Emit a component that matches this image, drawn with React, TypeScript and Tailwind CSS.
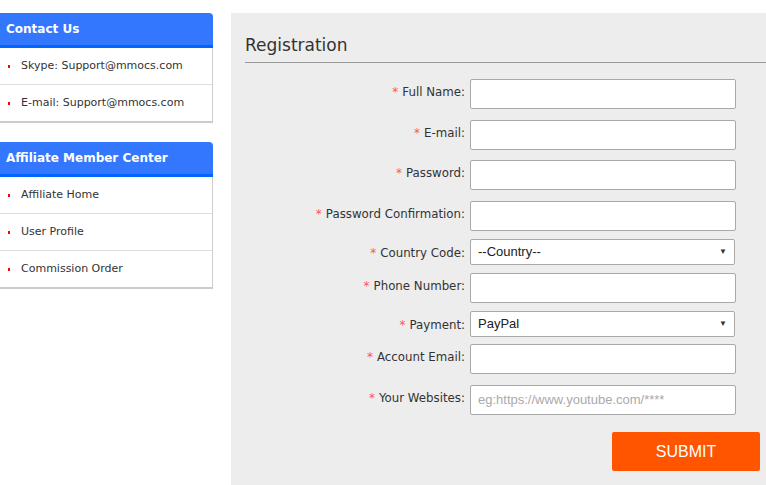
import React from 'react'

const SIDE_FONT = { fontFamily: '"DejaVu Sans", Verdana, sans-serif' }

function SideBox({ title, items }: { title: string; items: string[] }) {
  return (
    <div className="w-[213px]">
      <div className="h-[35px] rounded-tr-[4px] border-b-[3px] border-[#0066ff] bg-[#3377ff] pl-[6px] text-[12px] font-bold leading-[32px] text-white">
        {title}
      </div>
      <ul className="border-r border-b-2 border-[#cccccc] bg-white">
        {items.map((item, i) => {
          const last = i === items.length - 1
          return (
            <li
              key={item}
              className={`flex items-center pl-[8px] text-[11px] text-[#333333] ${
                last ? 'h-[36px]' : 'h-[37px] border-b border-[#dddddd]'
              }`}
            >
              <span className="mr-[11px] h-[3px] w-[2px] bg-[#ff0000]" />
              {item}
            </li>
          )
        })}
      </ul>
    </div>
  )
}

type Row = { label: string; kind: 'text' | 'select'; top: number; value?: string; placeholder?: string }

const ROWS: Row[] = [
  { label: 'Full Name:', kind: 'text', top: 16 },
  { label: 'E-mail:', kind: 'text', top: 11 },
  { label: 'Password:', kind: 'text', top: 10 },
  { label: 'Password Confirmation:', kind: 'text', top: 11 },
  { label: 'Country Code:', kind: 'select', top: 8, value: '--Country--' },
  { label: 'Phone Number:', kind: 'text', top: 8 },
  { label: 'Payment:', kind: 'select', top: 8, value: 'PayPal' },
  { label: 'Account Email:', kind: 'text', top: 7 },
  { label: 'Your Websites:', kind: 'text', top: 11, placeholder: 'eg:https://www.youtube.com/****' },
]

function FormRow({ row }: { row: Row }) {
  const isSelect = row.kind === 'select'
  return (
    <div className="flex" style={{ marginTop: row.top }}>
      <label
        className={`w-[234px] text-right text-[11.8px] text-[#333333] ${isSelect ? 'pt-[5px]' : 'pt-[4px]'}`}
        style={SIDE_FONT}
      >
        <span className="mr-[4px] text-[12px] text-[#ff5555]">*</span>
        {row.label}
      </label>
      {isSelect ? (
        <div
          className="ml-[5px] flex h-[26px] w-[265px] items-center justify-between rounded-[2px] border border-[#a9a9a9] bg-white pl-[7px] pr-[7px] text-[13px] text-[#222222]"
          style={{ fontFamily: '"Liberation Sans", Arial, sans-serif' }}
        >
          <span>{row.value}</span>
          <span className="text-[8px] text-[#333333]">▼</span>
        </div>
      ) : (
        <div
          className="ml-[5px] flex h-[30px] w-[266px] items-center rounded-[2px] border border-[#a9a9a9] bg-white pl-[7px] text-[13px] text-[#aaaaaa]"
          style={{ fontFamily: '"Liberation Sans", Arial, sans-serif' }}
        >
          {row.placeholder ?? ''}
        </div>
      )}
    </div>
  )
}

export default function App() {
  return (
    <div className="flex h-[485px] w-[766px] overflow-hidden bg-white pt-[13px]" style={SIDE_FONT}>
      <div className="flex w-[213px] flex-col gap-[19px]">
        <SideBox title="Contact Us" items={['Skype: Support@mmocs.com', 'E-mail: Support@mmocs.com']} />
        <SideBox title="Affiliate Member Center" items={['Affiliate Home', 'User Profile', 'Commission Order']} />
      </div>
      <div className="ml-[18px] flex-1 bg-[#ededed]">
        <div className="ml-[14px] border-b border-[#999999] pt-[20px] pb-[5px]">
          <h1 className="text-[17px] leading-[24px] text-[#333333]">Registration</h1>
        </div>
        {ROWS.map((row) => (
          <FormRow key={row.label} row={row} />
        ))}
        <div className="mt-[17px] flex justify-end pr-[6px]">
          <button
            className="h-[39px] w-[148px] rounded-[2px] bg-[#ff5500] text-[16px] text-white"
            style={{ fontFamily: '"Liberation Sans", Arial, sans-serif' }}
          >
            SUBMIT
          </button>
        </div>
      </div>
    </div>
  )
}
